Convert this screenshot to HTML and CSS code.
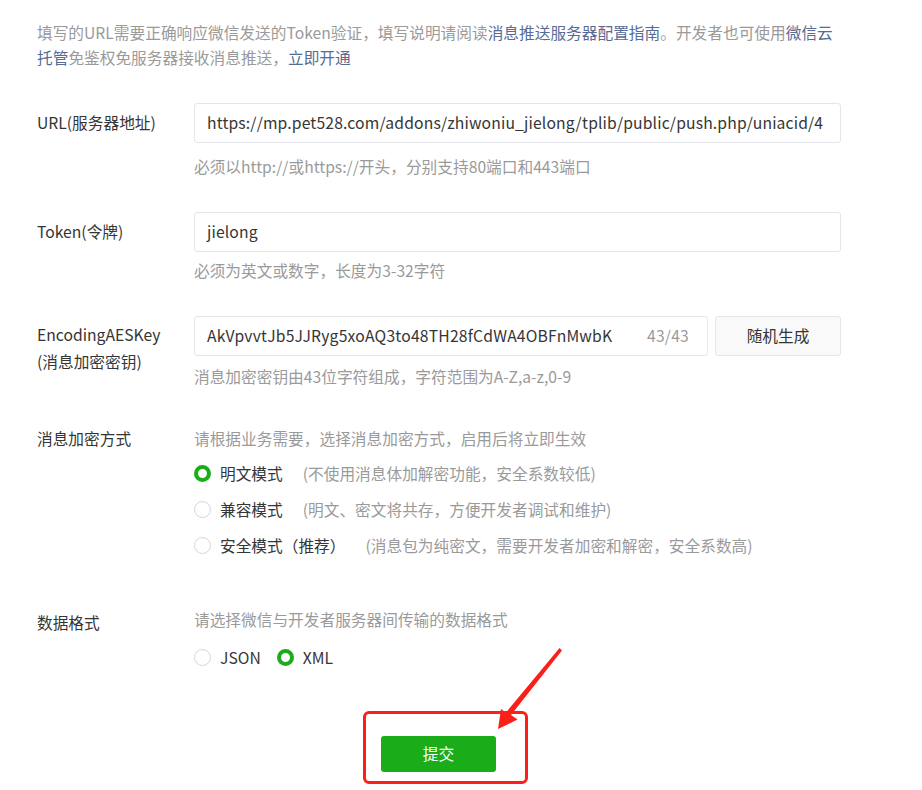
FILE: index.html
```html
<!DOCTYPE html>
<html lang="zh-CN">
<head>
<meta charset="utf-8">
<title>服务器配置</title>
<link rel="stylesheet" href="styles.css">
</head>
<body>
<div class="page">
  <p class="intro"><span>填写的URL需要正确响应微信发送的Token验证，填写说明请阅读</span><a class="link">消息推送服务器配置指南</a><span>。开发者也可使用</span><a class="link">微信云</a><br><a class="link">托管</a><span>免鉴权免服务器接收消息推送，</span><a class="link">立即开通</a></p>

  <div class="row row-url">
    <div class="label label-input">URL(服务器地址)</div>
    <div class="field">
      <div class="input">https://mp.pet528.com/addons/zhiwoniu_jielong/tplib/public/push.php/uniacid/4</div>
      <div class="hint hint-url">必须以http://或https://开头，分别支持80端口和443端口</div>
    </div>
  </div>

  <div class="row row-token">
    <div class="label label-input">Token(令牌)</div>
    <div class="field">
      <div class="input">jielong</div>
      <div class="hint hint-token">必须为英文或数字，长度为3-32字符</div>
    </div>
  </div>

  <div class="row row-aes">
    <div class="label label-aes"><div>EncodingAESKey</div><div>(消息加密密钥)</div></div>
    <div class="field">
      <div class="aes-line">
        <div class="input input-aes"><span>AkVpvvtJb5JJRyg5xoAQ3to48TH28fCdWA4OBFnMwbK</span><span class="count">43/43</span></div>
        <div class="btn-gen">随机生成</div>
      </div>
      <div class="hint hint-aes">消息加密密钥由43位字符组成，字符范围为A-Z,a-z,0-9</div>
    </div>
  </div>

  <div class="row row-mode">
    <div class="label">消息加密方式</div>
    <div class="field">
      <div class="hint">请根据业务需要，选择消息加密方式，启用后将立即生效</div>
      <div class="radios">
        <div class="radio-row"><span class="radio checked"></span><span class="radio-text">明文模式</span><span class="desc">(不使用消息体加解密功能，安全系数较低)</span></div>
        <div class="radio-row"><span class="radio"></span><span class="radio-text">兼容模式</span><span class="desc">(明文、密文将共存，方便开发者调试和维护)</span></div>
        <div class="radio-row"><span class="radio"></span><span class="radio-text">安全模式（推荐）</span><span class="desc">(消息包为纯密文，需要开发者加密和解密，安全系数高)</span></div>
      </div>
    </div>
  </div>

  <div class="row row-format">
    <div class="label label-format">数据格式</div>
    <div class="field">
      <div class="hint">请选择微信与开发者服务器间传输的数据格式</div>
      <div class="radio-row format-line">
        <span class="radio"></span><span class="radio-text text-json">JSON</span>
        <span class="radio checked"></span><span class="radio-text">XML</span>
      </div>
    </div>
  </div>

  <div class="submit-row">
    <div class="btn-submit">提交</div>
  </div>

  <div class="mark-box"></div>
  <svg class="mark-arrow" width="922" height="790" viewBox="0 0 922 790">
    <polygon points="559.5,648 562,650.5 511,715 517.5,719.5 498,729 501,709 506,712.5" fill="#fb1f1a"/>
  </svg>
</div>
</body>
</html>
```

FILE: styles.css
```css
html, body {
  margin: 0;
  padding: 0;
  background: #ffffff;
}

body {
  font-family: "Noto Sans CJK SC", "Noto Sans", sans-serif;
  font-size: 15.7px;
  color: #353535;
}

.page {
  position: relative;
  width: 922px;
  height: 790px;
  padding: 20px 0 0 37px;
  box-sizing: border-box;
  overflow: hidden;
}

.intro {
  margin: 0;
  width: 806px;
  line-height: 25px;
  color: #9a9a9a;
}

.link {
  color: #576b95;
  text-decoration: none;
}

.row {
  display: flex;
}

.label {
  width: 157px;
  flex: none;
  line-height: 22px;
  color: #353535;
}

.label-input {
  line-height: 40px;
}

.label-aes {
  line-height: 27px;
  padding-top: 5px;
}

.label-format {
  padding-top: 3px;
}

.field {
  width: 647px;
  flex: none;
}

.row-url { margin-top: 33px; }
.row-token { margin-top: 34px; }
.row-aes { margin-top: 34px; }
.row-mode { margin-top: 40px; }
.row-format { margin-top: 46px; }

.input {
  height: 40px;
  box-sizing: border-box;
  border: 1px solid #e4e6eb;
  border-radius: 3px;
  padding: 0 12px;
  line-height: 38px;
  color: #353535;
  white-space: nowrap;
  overflow: hidden;
  letter-spacing: 0.15px;
}

.aes-line {
  display: flex;
  gap: 7px;
}

.input-aes {
  width: 514px;
  flex: none;
  display: flex;
  justify-content: space-between;
  padding-right: 18px;
  letter-spacing: 0.2px;
}

.count {
  color: #9a9a9a;
}

.btn-gen {
  width: 126px;
  height: 40px;
  box-sizing: border-box;
  border: 1px solid #e4e6eb;
  border-radius: 3px;
  background: #f9f9fa;
  text-align: center;
  line-height: 38px;
  color: #353535;
}

.hint {
  line-height: 22px;
  color: #9a9a9a;
}

.hint-url { margin-top: 13px; }
.hint-token { margin-top: 8px; }
.hint-aes { margin-top: 10px; }

.radios {
  margin-top: 5px;
}

.radio-row {
  display: flex;
  align-items: center;
  height: 36px;
}

.format-line {
  margin-top: 8px;
}

.radio {
  width: 17px;
  height: 17px;
  box-sizing: border-box;
  border: 1px solid #d6d6d6;
  border-radius: 50%;
  background: #ffffff;
  flex: none;
}

.radio.checked {
  border: 4px solid #1aad19;
}

.radio-text {
  margin-left: 9px;
  color: #353535;
}

.text-json {
  margin-right: 16px;
}

.desc {
  margin-left: 20px;
  color: #9a9a9a;
}

.submit-row {
  margin-top: 61px;
  padding-left: 344px;
}

.btn-submit {
  width: 115px;
  height: 36px;
  border-radius: 3px;
  background: #1aad19;
  color: #ffffff;
  text-align: center;
  line-height: 36px;
}

.mark-box {
  position: absolute;
  left: 363px;
  top: 711px;
  width: 165px;
  height: 73px;
  box-sizing: border-box;
  border: 3px solid #fb1f1a;
  border-radius: 6px;
}

.mark-arrow {
  position: absolute;
  left: 0;
  top: 0;
}
```
